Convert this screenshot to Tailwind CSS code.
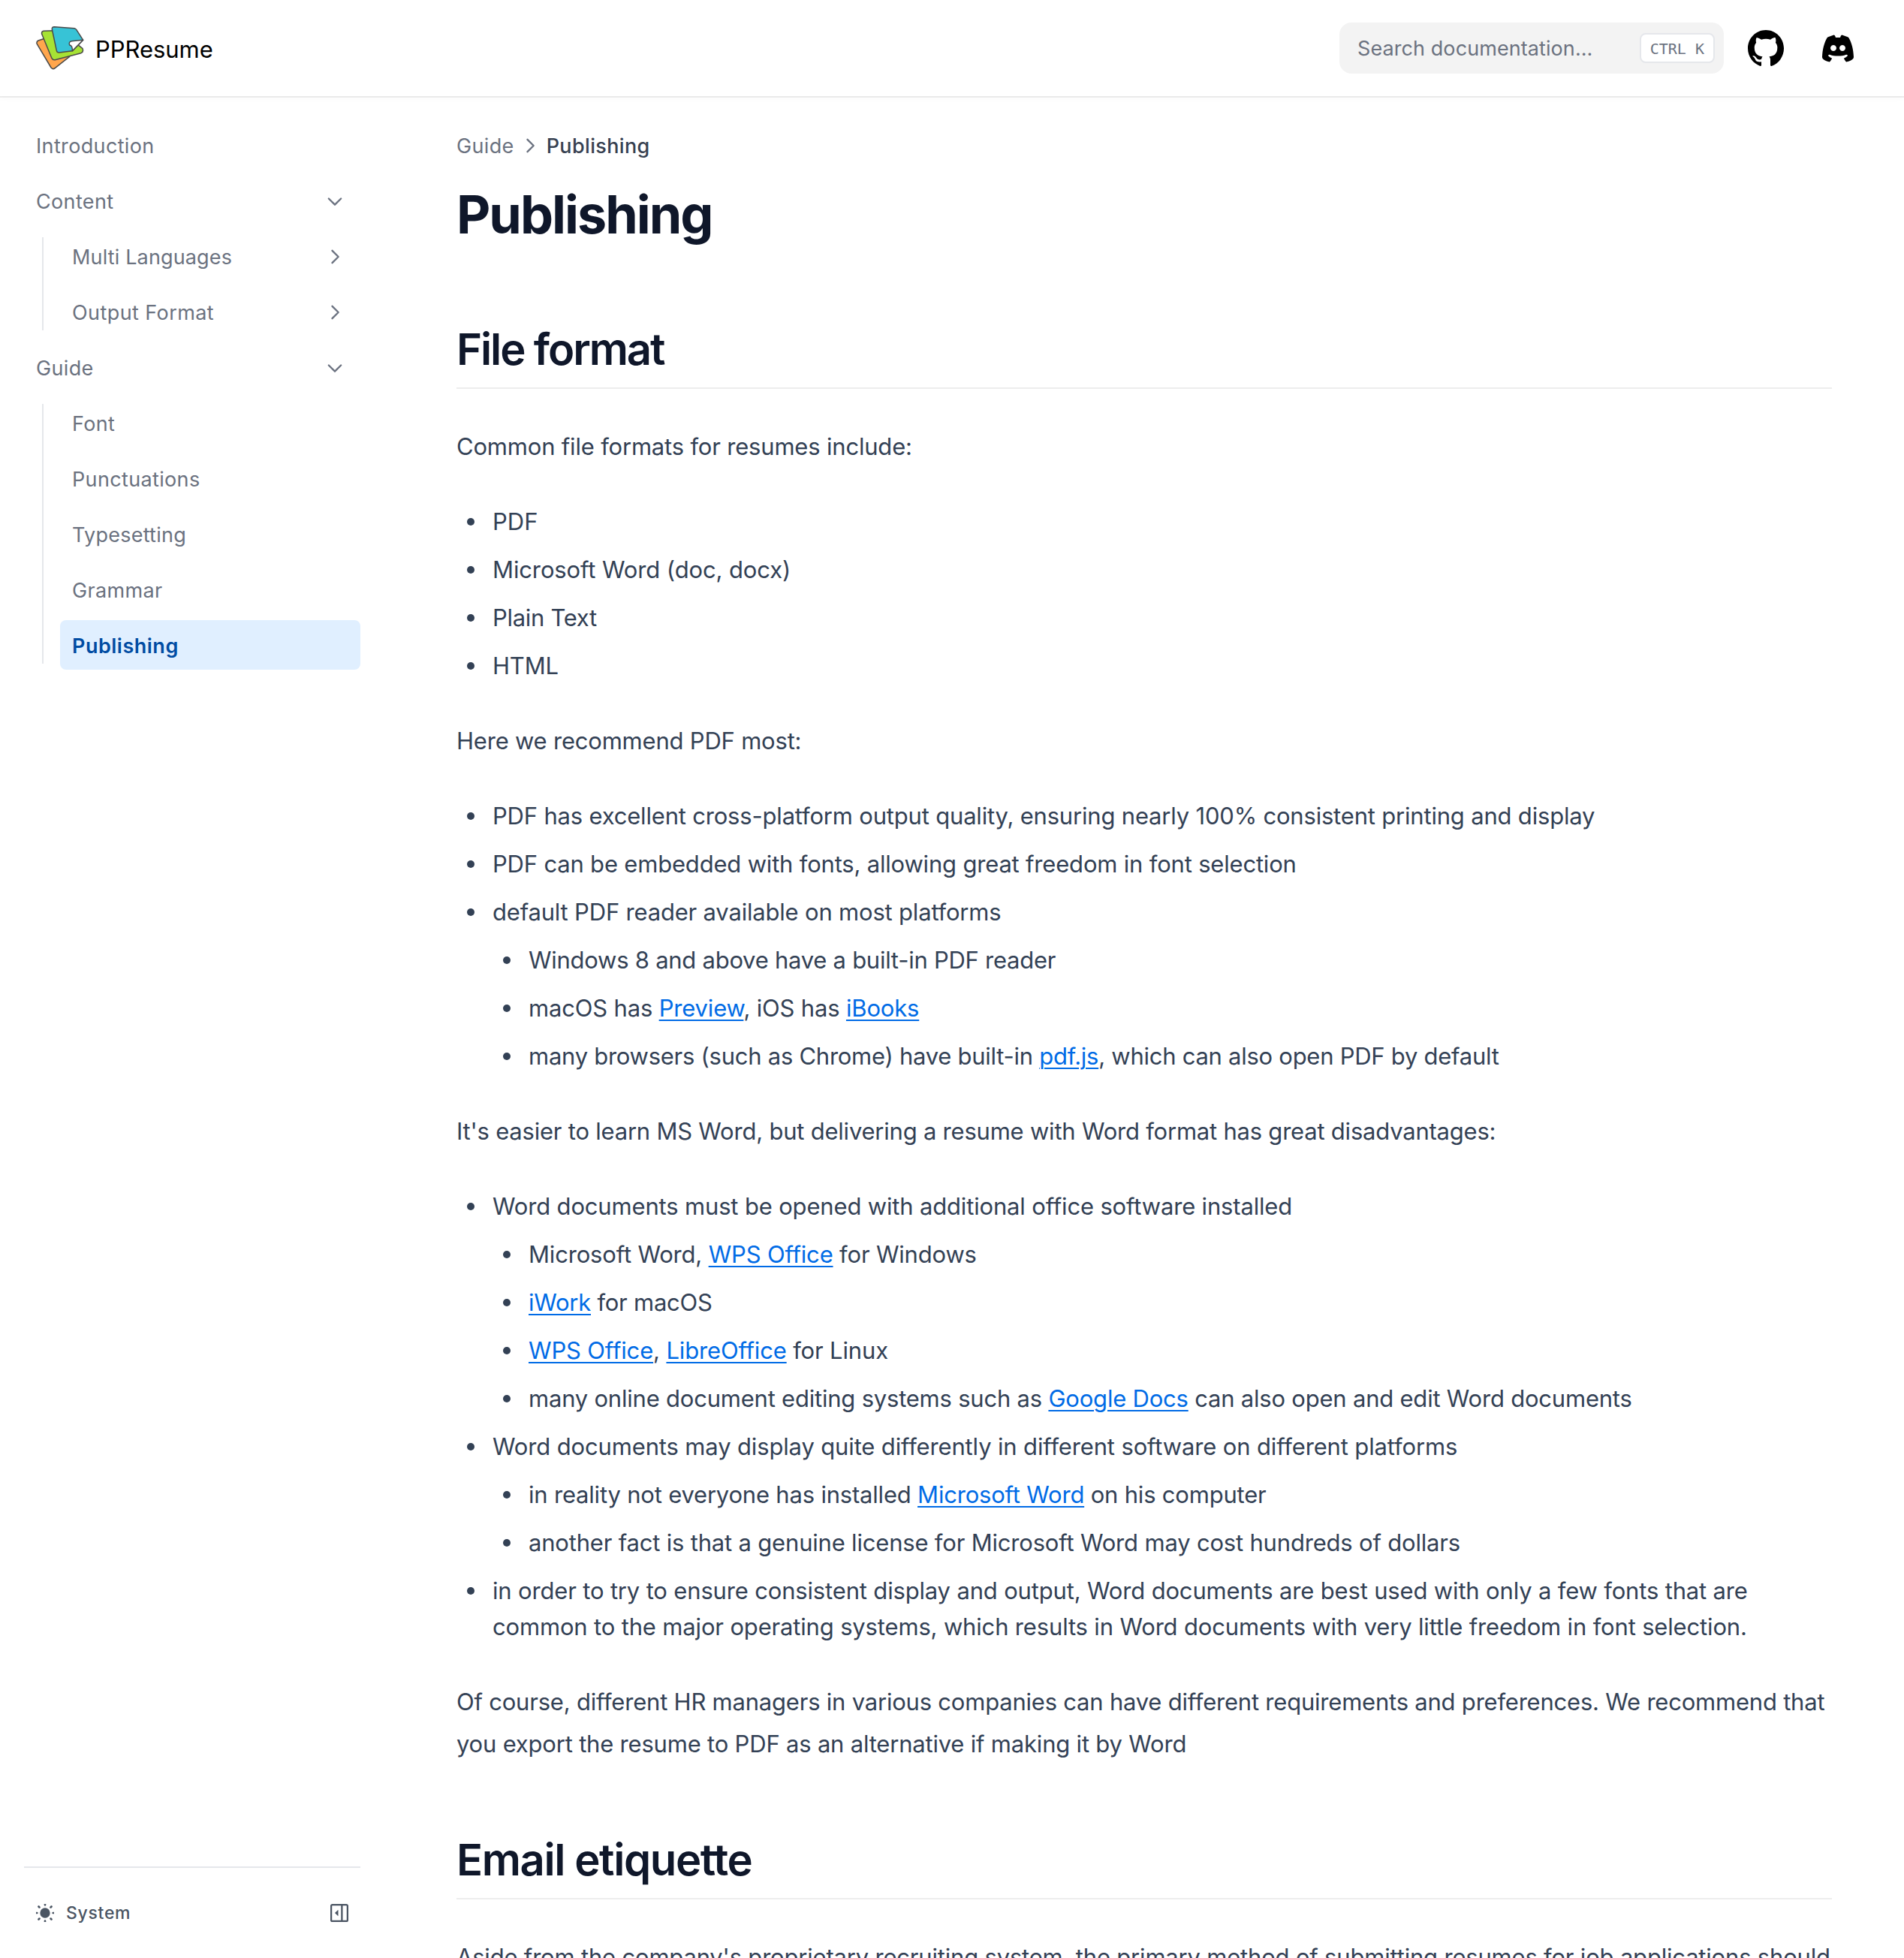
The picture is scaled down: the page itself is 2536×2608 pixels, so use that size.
<!DOCTYPE html>
<html lang="en">
<head>
<meta charset="utf-8">
<title>Publishing – PPResume</title>
<script src="https://cdn.jsdelivr.net/npm/@tailwindcss/browser@4"></script>
</head>
<body class="flex h-screen flex-col overflow-hidden bg-white font-[Inter,sans-serif] antialiased">

<header class="flex h-32 shrink-0 items-center bg-white pl-12 pr-16 shadow-[0_4px_8px_rgba(0,0,0,0.02),0_2px_0_rgba(0,0,0,0.07)]">
  <a class="mr-auto flex items-center gap-[15px]">
    <svg class="h-[62px] w-16" viewBox="54 39 192 186" fill="none" stroke="#4a4a4a" stroke-width="4.5" stroke-linejoin="round">
      <path fill="#ffa64d" d="M63 102L84 95L188 166L130 212Q121 219 114 210L58 116Q54 107 63 102Z"/>
      <path fill="#a6e234" d="M84 64L130 62L225 122L240 134Q245 147 234 152L130 179Q121 181 117 173L77 76Q75 66 84 64Z"/>
      <path fill="#37c3d6" d="M127 47L207 53Q212 54 215 58L242 100L200 143L147 150Q138 151 136 142L118 57Q117 47 127 47Z"/>
      <path fill="#fff" d="M242 100L197 104Q183 107 188 120Q200 122 199 143Z"/>
    </svg>
    <span class="pt-[3px] text-[31px] leading-12 tracking-[-0.05px] text-black">PPResume</span>
  </a>
  <div class="flex h-[68px] w-[512px] items-center justify-between rounded-2xl bg-[#f3f3f3] pl-6 pr-3">
    <span class="pt-0.5 text-[27px] tracking-[0.08px] text-[#6b7280]">Search documentation...</span>
    <kbd class="flex h-10 items-center rounded-lg border-2 border-[#e5e7eb] bg-white px-3 pt-px font-['DejaVu_Sans_Mono',monospace] text-[20px] text-[#6b7280]">CTRL K</kbd>
  </div>
  <svg class="ml-8 size-12" viewBox="3 3 18 18" fill="#000"><path d="M12 3C7.0275 3 3 7.12937 3 12.2276C3 16.3109 5.57625 19.7597 9.15374 20.9824C9.60374 21.0631 9.77249 20.7863 9.77249 20.5441C9.77249 20.3249 9.76125 19.5982 9.76125 18.8254C7.5 19.2522 6.915 18.2602 6.735 17.7412C6.63375 17.4759 6.19499 16.6569 5.8125 16.4378C5.4975 16.2647 5.0475 15.838 5.80124 15.8264C6.51 15.8149 7.01625 16.4954 7.18499 16.7723C7.99499 18.1679 9.28875 17.7758 9.80625 17.5335C9.885 16.9337 10.1212 16.53 10.38 16.2993C8.3775 16.0687 6.285 15.2728 6.285 11.7432C6.285 10.7397 6.63375 9.9092 7.20749 9.26326C7.1175 9.03257 6.8025 8.08674 7.2975 6.81794C7.2975 6.81794 8.05125 6.57571 9.77249 7.76377C10.4925 7.55615 11.2575 7.45234 12.0225 7.45234C12.7875 7.45234 13.5525 7.55615 14.2725 7.76377C15.9937 6.56418 16.7475 6.81794 16.7475 6.81794C17.2424 8.08674 16.9275 9.03257 16.8375 9.26326C17.4113 9.9092 17.76 10.7281 17.76 11.7432C17.76 15.2843 15.6563 16.0687 13.6537 16.2993C13.98 16.5877 14.2613 17.1414 14.2613 18.0065C14.2613 19.2407 14.25 20.2326 14.25 20.5441C14.25 20.7863 14.4188 21.0746 14.8688 20.9824C16.6554 20.364 18.2079 19.1866 19.3078 17.6162C20.4077 16.0457 20.9995 14.1611 21 12.2276C21 7.12937 16.9725 3 12 3Z"/></svg>
  <div class="ml-12 flex size-12 items-center justify-center">
    <svg class="h-[37px] w-[42px]" viewBox="0 0 126 111" fill="#000" fill-rule="evenodd"><path d="M24 10L45 2Q50 1 52 7L54 12H72L74 7Q76 1 81 2L102 10Q105 11 107 14C118 33 125 60 126 90Q126 95 122 98C116 103 107 107 99 109Q96 110 94 107L88 98C86 95 88 94 91 93L99 88Q103 85 101 82Q99 79 94 81C80 87 46 87 32 81Q27 79 25 82Q23 85 27 88L35 93C38 94 40 95 38 98L32 107Q30 110 27 109C19 107 10 103 4 98Q0 95 0 90C1 60 8 33 19 14Q21 11 24 10ZM45 42a12 12 0 1 0 0.01 0ZM81 42a12 12 0 1 0 0.01 0Z"/></svg>
  </div>
</header>

<div class="flex min-h-0 flex-1">
  <aside class="flex w-[512px] shrink-0 flex-col justify-between px-8 pt-8 text-[27px] leading-[42px] tracking-[0.35px] text-[#6b7280]">
    <nav class="flex w-[448px] flex-col gap-2">
      <a class="px-4 pb-2.5 pt-3.5">Introduction</a>
      <div class="flex items-center justify-between px-4 pb-2.5 pt-3.5">Content
        <svg class="mb-0.5 mr-1 size-7" viewBox="0 0 24 24" fill="none" stroke="currentColor" stroke-width="2" stroke-linecap="round" stroke-linejoin="round"><path d="M5 9l7 7 7-7"/></svg>
      </div>
      <div class="flex">
        <div class="my-2 ml-6 w-0.5 bg-[#e5e7eb]"></div>
        <div class="ml-[22px] flex flex-1 flex-col gap-2">
          <div class="flex items-center justify-between px-4 pb-2.5 pt-3.5 tracking-[0.15px]">Multi Languages
            <svg class="mb-0.5 mr-1 size-7" viewBox="0 0 24 24" fill="none" stroke="currentColor" stroke-width="2" stroke-linecap="round" stroke-linejoin="round"><path d="M9 5l7 7-7 7"/></svg>
          </div>
          <div class="flex items-center justify-between px-4 pb-2.5 pt-3.5 tracking-[0.42px]">Output Format
            <svg class="mb-0.5 mr-1 size-7" viewBox="0 0 24 24" fill="none" stroke="currentColor" stroke-width="2" stroke-linecap="round" stroke-linejoin="round"><path d="M9 5l7 7-7 7"/></svg>
          </div>
        </div>
      </div>
      <div class="flex items-center justify-between px-4 pb-2.5 pt-3.5">Guide
        <svg class="mb-0.5 mr-1 size-7" viewBox="0 0 24 24" fill="none" stroke="currentColor" stroke-width="2" stroke-linecap="round" stroke-linejoin="round"><path d="M5 9l7 7 7-7"/></svg>
      </div>
      <div class="flex">
        <div class="my-2 ml-6 w-0.5 bg-[#e5e7eb]"></div>
        <div class="ml-[22px] flex flex-1 flex-col gap-2">
          <a class="px-4 pb-2.5 pt-3.5">Font</a>
          <a class="px-4 pb-2.5 pt-3.5">Punctuations</a>
          <a class="px-4 pb-2.5 pt-3.5 tracking-[0.25px]">Typesetting</a>
          <a class="px-4 pb-2.5 pt-3.5">Grammar</a>
          <a class="rounded-lg bg-[#e0efff] px-4 pb-2.5 pt-3.5 font-semibold tracking-[0.5px] text-[#004ca3]">Publishing</a>
        </div>
      </div>
    </nav>
    <div class="flex h-[122px] w-[448px] items-center justify-between border-t-2 border-[#e5e7eb] px-4 text-[23px] font-medium tracking-[0.7px] text-[#4b5563]">
      <div class="flex items-center gap-4">
        <svg class="size-6" viewBox="3 3 18 18" fill="currentColor" stroke="currentColor" stroke-width="2" stroke-linecap="round" stroke-linejoin="round"><path d="M12 3v1m0 16v1m9-9h-1M4 12H3m15.364 6.364l-.707-.707M6.343 6.343l-.707-.707m12.728 0l-.707.707M6.343 17.657l-.707.707M16 12a4 4 0 11-8 0 4 4 0 018 0z"/></svg>
        System
      </div>
      <svg class="size-6" viewBox="0 0 16 16" fill="currentColor"><path d="M4.177 7.823l2.396-2.396A.25.25 0 017 5.604v4.792a.25.25 0 01-.427.177L4.177 8.177a.25.25 0 010-.354z"/><path fill-rule="evenodd" d="M0 1.75C0 .784.784 0 1.75 0h12.5C15.216 0 16 .784 16 1.75v12.5A1.75 1.75 0 0114.25 16H1.75A1.75 1.75 0 010 14.25V1.75zm1.75-.25a.25.25 0 00-.25.25v12.5c0 .138.112.25.25.25H9.5v-13H1.75zm12.5 13a.25.25 0 00.25-.25V1.75a.25.25 0 00-.25-.25H11v13h3.25z"/></svg>
    </div>
  </aside>

  <main class="ml-24 w-[1832px] shrink-0 pt-[45px] text-[31px] leading-12 tracking-[-0.19px] text-[#334155] [&_a]:text-[#006be6] [&_a]:underline [&_a]:decoration-2 [&_a]:underline-offset-4 [&_li]:mt-4 [&_li]:before:-ml-[34px] [&_li]:before:mr-6 [&_li]:before:inline-block [&_li]:before:size-2.5 [&_li]:before:rounded-full [&_li]:before:bg-current [&_li]:before:align-[6px] [&_li]:before:content-['']">
    <div class="flex h-[42px] items-center text-[27px] leading-[42px] tracking-[0.35px]">
      <span class="pt-0.5 text-[#6b7280]">Guide</span>
      <svg class="ml-[7px] mr-2 size-7 text-[#6b7280]" viewBox="0 0 24 24" fill="none" stroke="currentColor" stroke-width="2" stroke-linecap="round" stroke-linejoin="round"><path d="M9 5l7 7-7 7"/></svg>
      <span class="pt-0.5 font-medium text-[#374151]">Publishing</span>
    </div>
    <h1 class="mt-[17px] text-[70px] font-bold leading-[107px] tracking-[-2px] text-[#0f172a]">Publishing</h1>

    <h2 class="mt-20 border-b-2 border-[#ededed] pb-1.5 pt-px text-[58px] font-semibold leading-[90px] tracking-[-2.1px] text-[#0f172a]">File format</h2>
    <p class="mt-[49px] leading-14">Common file formats for resumes include:</p>
    <ul class="ml-12 mt-12">
      <li class="!mt-0 tracking-normal">PDF</li>
      <li class="tracking-[-0.12px]">Microsoft Word (doc, docx)</li>
      <li class="tracking-[-0.3px]">Plain Text</li>
      <li>HTML</li>
    </ul>
    <p class="mt-12 leading-14 tracking-[-0.21px]">Here we recommend PDF most:</p>
    <ul class="ml-12 mt-12">
      <li class="!mt-0">PDF has excellent cross-platform output quality, ensuring nearly 100% consistent printing and display</li>
      <li>PDF can be embedded with fonts, allowing great freedom in font selection</li>
      <li>default PDF reader available on most platforms
        <ul class="ml-12">
          <li class="tracking-[-0.26px]">Windows 8 and above have a built-in PDF reader</li>
          <li class="tracking-[-0.175px]">macOS has <a>Preview</a>, iOS has <a>iBooks</a></li>
          <li class="tracking-[-0.265px]">many browsers (such as Chrome) have built-in <a>pdf.js</a>, which can also open PDF by default</li>
        </ul>
      </li>
    </ul>
    <p class="mt-12 leading-14 tracking-[-0.22px]">It's easier to learn MS Word, but delivering a resume with Word format has great disadvantages:</p>
    <ul class="ml-12 mt-12">
      <li class="!mt-0 tracking-[-0.165px]">Word documents must be opened with additional office software installed
        <ul class="ml-12">
          <li class="tracking-[-0.18px]">Microsoft Word, <a>WPS Office</a> for Windows</li>
          <li class="tracking-[-0.25px]"><a>iWork</a> for macOS</li>
          <li class="tracking-[-0.16px]"><a>WPS Office</a>, <a>LibreOffice</a> for Linux</li>
          <li class="tracking-[-0.215px]">many online document editing systems such as <a>Google Docs</a> can also open and edit Word documents</li>
        </ul>
      </li>
      <li class="tracking-[-0.145px]">Word documents may display quite differently in different software on different platforms
        <ul class="ml-12 tracking-[-0.2px]">
          <li>in reality not everyone has installed <a>Microsoft Word</a> on his computer</li>
          <li class="tracking-[-0.19px]">another fact is that a genuine license for Microsoft Word may cost hundreds of dollars</li>
        </ul>
      </li>
      <li class="tracking-[-0.165px]">in order to try to ensure consistent display and output, Word documents are best used with only a few fonts that are<br>common to the major operating systems, which results in Word documents with very little freedom in font selection.</li>
    </ul>
    <p class="mt-12 whitespace-nowrap leading-14 tracking-[-0.215px]">Of course, different HR managers in various companies can have different requirements and preferences. We recommend that<br><span class="tracking-[-0.2px]">you export the resume to PDF as an alternative if making it by Word</span></p>

    <h2 class="mt-20 border-b-2 border-[#ededed] pb-1.5 pt-px text-[58px] font-semibold leading-[90px] tracking-[-1.4px] text-[#0f172a]">Email etiquette</h2>
    <p class="mt-[49px] whitespace-nowrap leading-14 tracking-[-0.193px]">Aside from the company's proprietary recruiting system, the primary method of submitting resumes for job applications should</p>
  </main>
</div>
</body>
</html>
